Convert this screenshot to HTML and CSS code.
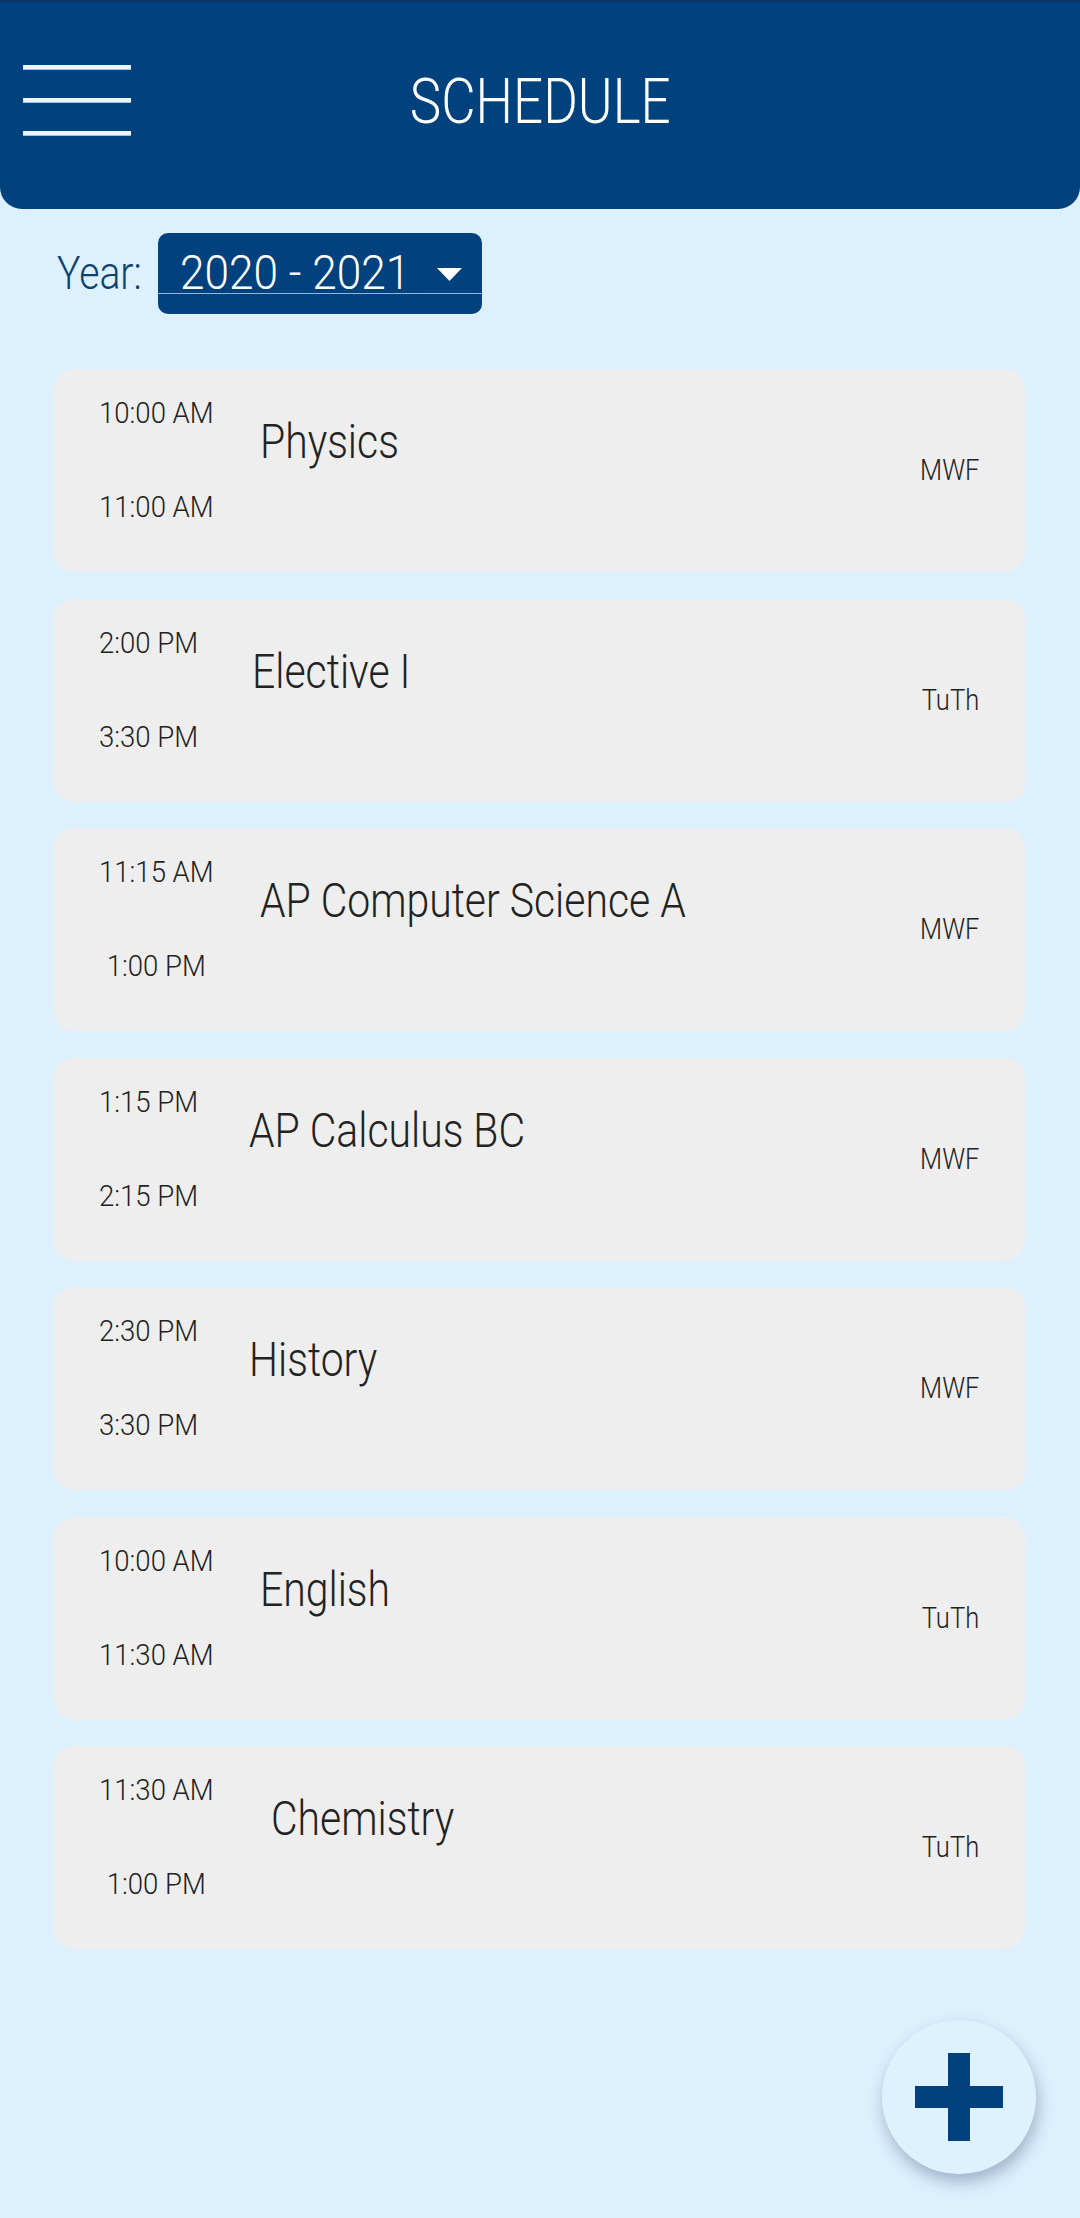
FILE: index.html
```html
<!DOCTYPE html>
<html>
<head>
<meta charset="utf-8">
<link rel="stylesheet" href="styles.css">
</head>
<body>
<div class="page">
  <header class="topbar">
    <div class="menu">
      <span class="bar"></span><span class="bar"></span><span class="bar"></span>
    </div>
    <h1 class="title">SCHEDULE</h1>
    <div></div>
  </header>

  <div class="year-row">
    <span class="year-label">Year:</span>
    <div class="select">
      <div class="select-field">
        <span class="select-value"><span class="squeeze-wide">2020 - 2021</span></span>
        <svg class="caret" width="25" height="13" viewBox="0 0 25 13"><polygon points="0,0 25,0 12.5,13" fill="#fff"/></svg>
      </div>
    </div>
  </div>

  <div class="list">
    <div class="card">
      <div class="times"><span>10:00 AM</span><span>11:00 AM</span></div>
      <div class="name n-am">Physics</div>
      <div class="days">MWF</div>
    </div>
    <div class="card">
      <div class="times"><span>2:00 PM</span><span>3:30 PM</span></div>
      <div class="name n-pm2">Elective I</div>
      <div class="days">TuTh</div>
    </div>
    <div class="card">
      <div class="times"><span>11:15 AM</span><span>1:00 PM</span></div>
      <div class="name n-am">AP Computer Science A</div>
      <div class="days">MWF</div>
    </div>
    <div class="card">
      <div class="times"><span>1:15 PM</span><span>2:15 PM</span></div>
      <div class="name n-pm">AP Calculus BC</div>
      <div class="days">MWF</div>
    </div>
    <div class="card">
      <div class="times"><span>2:30 PM</span><span>3:30 PM</span></div>
      <div class="name n-pm">History</div>
      <div class="days">MWF</div>
    </div>
    <div class="card">
      <div class="times"><span>10:00 AM</span><span>11:30 AM</span></div>
      <div class="name n-am">English</div>
      <div class="days">TuTh</div>
    </div>
    <div class="card">
      <div class="times"><span>11:30 AM</span><span>1:00 PM</span></div>
      <div class="name n-wide">Chemistry</div>
      <div class="days">TuTh</div>
    </div>
  </div>

  <button class="fab" aria-label="Add">
    <svg width="88" height="88" viewBox="0 0 88 88">
      <rect x="33" y="0" width="22" height="88" fill="#01427e"/>
      <rect x="0" y="33" width="88" height="22" fill="#01427e"/>
    </svg>
  </button>
</div>
</body>
</html>
```

FILE: styles.css
```css
* { box-sizing: border-box; }

html, body {
  margin: 0;
  padding: 0;
}

body {
  background: #ddf0fe;
  font-family: Roboto, "Liberation Sans", sans-serif;
  font-weight: 300;
  color: #222;
}

.page {
  position: relative;
  width: 1080px;
  height: 2218px;
  overflow: hidden;
}

.topbar {
  height: 209px;
  background: #01427e;
  border-top: 2px solid #0b3462;
  border-radius: 0 0 22px 22px;
  padding-top: 63px;
  display: grid;
  grid-template-columns: 1fr auto 1fr;
  align-items: start;
}

.menu {
  margin-left: 23px;
  width: 108px;
  height: 70px;
  display: flex;
  flex-direction: column;
  justify-content: space-between;
}

.bar {
  display: block;
  height: 4px;
  background: #eef4fb;
  box-shadow: 0 1px 0 #9fbfe0;
}

.title {
  margin: 5px 0 0;
  font-weight: 300;
  font-size: 63px;
  line-height: 63px;
  color: #fff;
  transform: scaleX(0.84);
  transform-origin: center;
}

.year-row {
  display: flex;
  align-items: baseline;
  margin: 24px 0 0 57px;
  white-space: nowrap;
}

.year-label {
  display: inline-block;
  font-size: 46px;
  color: #0d426f;
  margin-right: 1px;
  transform: scaleX(0.85);
  transform-origin: left;
}

.select {
  width: 324px;
  height: 81px;
  background: #01427e;
  border-radius: 10px;
  padding-top: 19px;
}

.select-field {
  display: flex;
  align-items: center;
  height: 42px;
  border-bottom: 1.5px solid #8db8e4;
  padding: 0 20px 0 22px;
}

.select-value {
  font-size: 48px;
  line-height: 41px;
  color: #fff;
  flex: 1;
}

.squeeze-wide {
  display: inline-block;
  transform: scaleX(0.92);
  transform-origin: left;
}

.caret {
  display: block;
  margin-top: 3px;
}

.list {
  margin: 55px 55px 0 54px;
  display: flex;
  flex-direction: column;
  gap: 26.5px;
}

.card {
  height: 203px;
  background: #eeeeee;
  border-radius: 20px;
  padding: 0 46px 0 45px;
  display: flex;
  align-items: flex-start;
}

.times {
  display: flex;
  flex-direction: column;
  align-items: center;
  padding-top: 30px;
  gap: 65px;
  font-size: 29px;
  line-height: 29px;
  color: #222;
  white-space: nowrap;
  transform: scaleX(0.95);
  transform-origin: left top;
}

.name {
  margin-top: 48px;
  font-size: 49px;
  line-height: 49px;
  color: #222;
  white-space: nowrap;
  transform: scaleX(0.835);
  transform-origin: left top;
}

.n-am { margin-left: 40px; }
.n-pm { margin-left: 46px; }
.n-pm2 { margin-left: 49px; }
.n-wide { margin-left: 51px; }

.days {
  margin-left: auto;
  align-self: center;
  font-size: 29px;
  line-height: 29px;
  color: #222;
  transform: scaleX(0.88);
  transform-origin: right center;
}

.fab {
  position: absolute;
  left: 882px;
  top: 2020px;
  width: 154px;
  height: 154px;
  border-radius: 50%;
  border: none;
  padding: 0;
  background: #def1fe;
  box-shadow: 2px 8px 16px rgba(40, 70, 100, 0.35);
  display: flex;
  align-items: center;
  justify-content: center;
}

.fab svg { display: block; }
```
